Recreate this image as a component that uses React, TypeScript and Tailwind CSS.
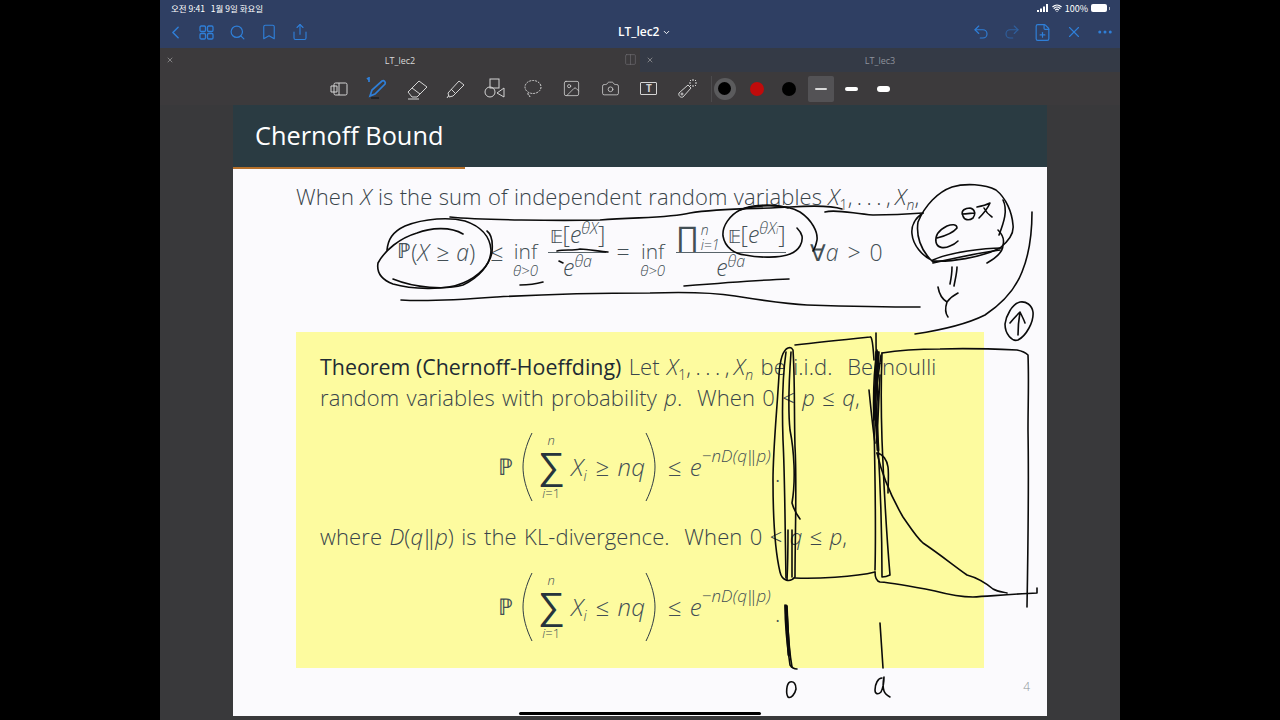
import { ReactNode } from "react";
import { Bookmark, Camera, ChevronDown, ChevronLeft, Columns2, Ellipsis, FilePlus, Image, Redo2, Search, Share, Undo2, Wifi, X } from "lucide-react";

const sans = "font-['Open_Sans','Noto_Sans',sans-serif]";
const dejavu = "font-['DejaVu_Sans',sans-serif]";

const ink = [
  // circle around P(X >= a)
  "M463 234C450 226 430 228 417 233C400 238 385 250 378 263C376 275 385 281 393 284C410 289 445 291 463 283C478 277 490 265 492 252C493 242 491 234 487 231",
  "M387 250C388 240 392 232 405 226C425 218 450 217 465 221C480 226 490 236 491 250C491 265 478 278 463 285C445 290 415 288 393 279",
  // top line
  "M450 217C480 220 560 221 600 220C640 217 670 218 690 213C720 208 760 209 790 207C805 206 830 205 842 209",
  "M825 212C835 209 850 213 873 215C890 215 910 214 923 213",
  // bottom line
  "M401 300C430 302 470 299 497 297C550 294 600 293 650 293C680 292 710 292 735 296C760 300 785 304 807 305C840 306 890 307 920 307",
  // small marks under the fraction
  "M520 285C528 285 536 284 543 282",
  "M557 251C565 249 572 251 580 249C590 249 600 252 608 252",
  "M559 261L563 263",
  "M684 286C720 283 760 280 789 279",
  // ellipse on E[e]
  "M788 208C772 203 750 205 740 210C730 215 722 226 723 236C725 248 735 254 745 255C760 258 780 258 790 254C800 250 803 242 802 236C801 232 799 230 797 228",
  "M740 210C755 205 785 203 800 212C812 220 818 232 817 240C816 245 815 248 813 251",
  // ring on the big e
  "M923 213C915 218 911 226 912 234C913 245 922 256 933 261C950 262 980 258 1000 248C1010 240 1014 232 1013 225C1012 212 1006 198 996 190C985 184 965 183 952 187C938 192 925 205 918 222C916 235 920 250 933 262",
  "M933 260C950 252 985 248 1002 248",
  "M933 263C955 258 985 252 1000 250",
  "M987 263C996 258 1003 252 1003 245C1005 238 1000 232 998 230",
  "M1003 200C1008 210 1004 222 999 235",
  // e theta lambda
  "M937 238C945 236 953 233 957 228C957 224 952 224 947 226C939 230 935 236 936 242C937 248 944 249 950 246C953 245 956 243 958 241",
  "M963 216C960 210 966 208 970 208C975 209 976 214 973 218C969 221 964 220 963 216ZM962 214C967 214 972 213 975 213",
  "M977 207C982 206 986 205 990 203C987 210 983 214 979 218M984 208C986 212 989 215 992 217",
  // under the ring
  "M952 267C952 273 951 279 950 284M957 267C957 273 955 280 954 286",
  "M938 287C939 293 942 299 947 302C950 298 954 295 958 293M947 302C945 308 945 313 948 317",
  // right arc
  "M1032 212C1032 235 1029 255 1022 272C1015 290 1000 305 985 315C965 325 935 331 915 334",
  // circled arrow
  "M1020 302C1012 304 1006 316 1005 324C1005 334 1012 342 1018 340C1026 336 1034 322 1033 312C1032 305 1026 301 1020 302",
  "M1018 335C1018 326 1019 318 1020 312M1010 323C1013 319 1017 315 1020 312C1022 316 1024 320 1025 323",
  // left band
  "M795 345C820 342 850 339 870 337C872 336 873 345 874 360",
  "M876 333C876 345 876 360 877 375",
  "M788 348C783 350 780 360 779 375C777 410 773 450 773 480C773 520 776 555 780 572C782 581 790 583 795 577C795 540 797 480 795 447C794 410 795 380 793 350C792 348 790 347 788 348",
  "M786 352C782 380 782 410 783 440C785 480 785 530 786 578",
  "M791 352C789 380 788 410 790 430C794 450 796 480 792 503C794 510 797 515 800 519",
  "M787 580C788 560 788 545 788 530M792 577L792 530",
  "M795 578C815 579 855 577 875 572",
  // right band
  "M877 350C874 370 873 400 874 425C875 470 876 530 875 570",
  "M869 390C871 410 873 430 875 443",
  "M879 352C877 380 876 410 878 445C880 480 882 540 882 577C886 577 888 576 890 575C887 540 884 490 882 440C881 410 881 380 882 353",
  "M876 352L878 400M878 352L874 420M881 355L875 400M880 375L877 440",
  // falling curve
  "M877 453C883 454 887 460 888 467C889 475 888 485 888 493",
  "M877 453C882 475 892 498 903 517C912 530 917 538 923 543C938 553 953 565 967 575C978 578 987 584 993 589C998 592 1003 592 1007 593",
  // axis
  "M875 572C875 578 876 581 880 582C895 583 915 587 935 591C950 595 965 597 973 597C990 596 1015 594 1037 593C1037 591 1037 590 1037 588",
  // big box
  "M882 353C900 350 920 349 940 349C965 348 995 349 1017 350C1022 351 1025 352 1028 355C1029 380 1028 405 1028 430C1029 490 1028 550 1027 607",
  // lower ticks
  "M785 605C785 625 787 645 790 665C792 668 794 669 797 669",
  "M787 606C788 625 788 645 792 667",
  "M880 623C881 640 882 655 883 668",
  // zero and a
  "M790 682C786 684 786 694 788 697C791 699 795 694 796 689C796 684 794 681 790 682",
  "M882 678C878 678 875 684 875 690C875 694 878 695 881 692C883 688 884 682 884 677C883 682 883 688 884 691C885 694 888 696 890 697",
];

const thick = [
  "M877 352L875 400L878 450",
  "M786 606C787 625 788 640 789 655",
];

const I = ({ children }: { children: ReactNode }) => <span className="italic">{children}</span>;

const Sub = ({ children }: { children: ReactNode }) => (
  <span className="relative top-[5px] text-[14px] leading-none">{children}</span>
);

const Sup = ({ children }: { children: ReactNode }) => (
  <span className="relative -top-[9px] text-[16px] leading-none italic">{children}</span>
);

// X1, ..., Xn run, set tighter than the words around it
const XRun = () => (
  <span className="[word-spacing:0px]">
    <I>X</I><Sub>1</Sub><span className="tracking-[4.5px]">,...,</span><I>X</I><Sub><I>n</I></Sub>
  </span>
);

const Inf = () => (
  <span className="flex flex-col items-center mt-[14px] w-[26px]">
    <span className="text-[21px] leading-[22px]">inf</span>
    <span className="text-[15px] leading-[16px] italic">{"θ>0"}</span>
  </span>
);

const Frac = ({ top, bottom, width }: { top: ReactNode; bottom: ReactNode; width: string }) => (
  <span className={"flex flex-col items-center " + width}>
    <span className="h-[30px] leading-[30px] whitespace-nowrap text-[23px] border-b border-[#59646a] w-full flex justify-center items-end">{top}</span>
    <span className="h-[28px] leading-[28px] whitespace-nowrap text-[23px]">{bottom}</span>
  </span>
);

const Paren = ({ flip }: { flip?: boolean }) => (
  <svg width="11" height="70" viewBox="0 0 11 70" className={flip ? "-scale-x-100" : ""}>
    <path d="M10 1C4 13 1 25 1 35C1 45 4 57 10 69" fill="none" stroke="#2f3c44" strokeWidth="1" />
  </svg>
);

const SumFormula = ({ rel }: { rel: string }) => (
  <div className="flex justify-center items-center h-[72px] text-[#434f55] text-[24px] font-light leading-none [word-spacing:0px]">
    <span className={dejavu + " text-[23px] mr-[9px]"}>ℙ</span>
    <Paren />
    <span className="flex flex-col items-center w-[34px] ml-[1px]">
      <span className="text-[13px] italic leading-[14px]">n</span>
      <span className={"text-[38px] leading-[38px] text-[#26343c] " + dejavu}>∑</span>
      <span className="text-[13px] leading-[16px]"><I>i</I>=1</span>
    </span>
    <span className="ml-[3px]"><I>X</I><Sub><I>i</I></Sub></span>
    <span className="ml-[9px]">{rel}</span>
    <span className="ml-[8px]"><I>nq</I></span>
    <Paren flip />
    <span className="ml-[12px]">≤</span>
    <span className="ml-[8px] flex items-start whitespace-nowrap">
      <I>e</I>
      <span className="text-[17px] leading-[18px] -mt-[8px] italic">−nD(q‖p)</span>
    </span>
    <span className="w-[11px] pl-[4px] relative top-[6px]">.</span>
  </div>
);

const ToolBtn = ({ children }: { children: ReactNode }) => (
  <span className="w-[38.7px] h-[24px] flex items-center justify-center shrink-0">{children}</span>
);

const NavBtn = ({ children }: { children: ReactNode }) => (
  <span className="w-[31px] flex items-center justify-center shrink-0">{children}</span>
);

const Swatch = ({ className }: { className: string }) => (
  <span className="w-[32px] flex items-center justify-center shrink-0"><span className={className} /></span>
);

export default function App() {
  return (
    <div className={"relative w-[1280px] h-[720px] overflow-hidden bg-black flex justify-center " + sans}>
      <div className="w-[960px] h-full flex flex-col bg-[#39393b]">
        {/* status + nav */}
        <div className="h-[48px] bg-[#2f3f63] text-white shrink-0 flex flex-col">
          <div className="h-[16px] flex items-center justify-between pl-[11px] pr-[10px] text-[8.5px] font-['Noto_Sans_CJK_KR','Noto_Sans',sans-serif] leading-none">
            <span className="whitespace-pre">{"오전 9:41   1월 9일 화요일"}</span>
            <span className="flex items-center gap-[2px] text-[9px]">
              <svg width="13" height="8" viewBox="0 0 13 8" fill="white">
                <rect x="0" y="6" width="2" height="2" />
                <rect x="3" y="4.5" width="2" height="3.5" />
                <rect x="6" y="2.5" width="2" height="5.5" />
                <rect x="9" y="0" width="2" height="8" />
              </svg>
              <Wifi size={10} strokeWidth={3} />
              <span className="ml-[1px]">100%</span>
              <span className="w-[16px] h-[8px] bg-white rounded-[2px] ml-[1px]" />
              <span className="w-[1px] h-[3px] bg-white/60" />
            </span>
          </div>
          <div className="flex-1 flex items-center justify-between text-[#2f7fd8] relative">
            <span className="flex items-center">
              <NavBtn><ChevronLeft size={21} strokeWidth={1.7} /></NavBtn>
              <NavBtn>
                <svg width="17" height="17" viewBox="0 0 17 17" fill="none" stroke="currentColor" strokeWidth="1.3">
                  <rect x="2" y="2" width="5.5" height="5.5" rx="1.2" />
                  <rect x="9.5" y="2" width="5.5" height="5.5" rx="1.2" />
                  <rect x="2" y="9.5" width="5.5" height="5.5" rx="1.2" />
                  <rect x="9.5" y="9.5" width="5.5" height="5.5" rx="1.2" />
                </svg>
              </NavBtn>
              <NavBtn><Search size={17} strokeWidth={1.7} /></NavBtn>
              <NavBtn><Bookmark size={18} strokeWidth={1.5} /></NavBtn>
              <NavBtn><Share size={18} strokeWidth={1.5} /></NavBtn>
            </span>
            <span className="absolute left-[458px] top-[7px] text-white text-[12px] font-semibold flex items-center gap-[3px]">
              LT_lec2 <ChevronDown size={9} strokeWidth={2.5} />
            </span>
            <span className="flex items-center">
              <NavBtn><Undo2 size={18} strokeWidth={1.5} /></NavBtn>
              <NavBtn><Redo2 size={18} strokeWidth={1.5} className="opacity-50" /></NavBtn>
              <NavBtn><FilePlus size={19} strokeWidth={1.5} /></NavBtn>
              <NavBtn><X size={18} strokeWidth={1.5} /></NavBtn>
              <NavBtn><Ellipsis size={18} strokeWidth={2} /></NavBtn>
            </span>
          </div>
        </div>

        {/* tabs */}
        <div className="h-[24px] flex shrink-0 text-[9px]">
          <div className="w-[480px] bg-[#3c3a3c] text-[#d8d8d8] relative flex items-center justify-center pt-[1px]">
            <X size={8} className="absolute left-[6px] top-[8px] text-[#a5a5a5]" />
            LT_lec2
            <Columns2 size={13} strokeWidth={1} className="absolute right-[3px] top-[5px] text-[#77767a]" />
          </div>
          <div className="w-[480px] bg-[#343a46] text-[#8d929c] relative flex items-center justify-center pt-[1px]">
            <X size={8} className="absolute left-[6px] top-[8px] text-[#a5a5a5]" />
            LT_lec3
          </div>
        </div>

        {/* toolbar */}
        <div className="h-[33px] bg-[#3c3a3c] shrink-0 flex items-center pl-[160px] text-[#d4d4d4]">
          <ToolBtn>
            <svg width="18" height="16" viewBox="0 0 18 16" fill="none" stroke="currentColor" strokeWidth="1">
              <rect x="4" y="2" width="13" height="12" rx="1.5" />
              <path d="M9 2V14M1 5H7V11H1Z" />
            </svg>
          </ToolBtn>
          <ToolBtn>
            <svg width="24" height="24" viewBox="0 0 24 24" fill="none" stroke="#2f7fd8" strokeWidth="1.7">
              <path d="M4 19L6 13L16 4C18 3 20 5 19 7L9 17Z" />
              <path d="M5 21H13" stroke="#1f2124" />
              <path d="M1 1L3 3M3 -1V5" />
            </svg>
          </ToolBtn>
          <ToolBtn>
            <svg width="24" height="24" viewBox="0 0 24 24" fill="none" stroke="currentColor" strokeWidth="1">
              <path d="M3 15L14 4L22 10L12 20H7Z" />
              <path d="M7 11L15 17M3 22H14" />
            </svg>
          </ToolBtn>
          <ToolBtn>
            <svg width="22" height="22" viewBox="0 0 22 22" fill="none" stroke="currentColor" strokeWidth="1">
              <path d="M4 15L15 3L20 7L9 18L5 19Z" />
              <path d="M7 11L12 16M3 20L5 17" />
            </svg>
          </ToolBtn>
          <ToolBtn>
            <svg width="21" height="21" viewBox="0 0 21 21" fill="none" stroke="currentColor" strokeWidth="1">
              <rect x="6" y="1" width="9" height="9" />
              <circle cx="6" cy="14" r="5" />
              <path d="M20 10V19L13 15Z" />
            </svg>
          </ToolBtn>
          <ToolBtn>
            <svg width="20" height="20" viewBox="0 0 20 20" fill="none" stroke="currentColor" strokeWidth="1">
              <ellipse cx="10" cy="8" rx="8" ry="6.5" strokeDasharray="2 1" />
              <path d="M5 14C4 16 7 16 7 18" />
            </svg>
          </ToolBtn>
          <ToolBtn><Image size={19} strokeWidth={1} /></ToolBtn>
          <ToolBtn><Camera size={19} strokeWidth={1} /></ToolBtn>
          <ToolBtn>
            <span className="w-[17px] h-[13px] border border-current rounded-[1px] text-[10px] font-bold leading-[11px] text-center">T</span>
          </ToolBtn>
          <ToolBtn>
            <svg width="21" height="21" viewBox="0 0 21 21" fill="none" stroke="currentColor" strokeWidth="1">
              <path d="M2 15L11 7L14 10L6 19C4 20 1 18 2 15Z" />
              <circle cx="5" cy="16" r="1" />
              <path d="M16 1V3M16 7V9M12 5H14M18 5H20M13 2L14 3M19 2L18 3M13 8L14 7M19 8L18 7" />
            </svg>
          </ToolBtn>
          <span className="w-[1px] h-[26px] bg-[#4c4b4d] ml-[4px]" />
          <span className="w-[22px] h-[22px] rounded-full bg-[#5b5b5d] flex items-center justify-center ml-[2px]">
            <span className="w-[13px] h-[13px] rounded-full bg-black" />
          </span>
          <span className="w-[5px]" />
          <Swatch className="w-[14px] h-[14px] rounded-full bg-[#c00b0b] block" />
          <Swatch className="w-[14px] h-[14px] rounded-full bg-black block" />
          <span className="w-[26px] h-[26px] rounded-[2px] bg-[#535255] flex items-center justify-center ml-[3px]">
            <span className="w-[12px] h-[2px] bg-[#d9d9d9] rounded-full" />
          </span>
          <span className="w-[2px]" />
          <Swatch className="w-[13px] h-[4px] rounded-full bg-white block" />
          <Swatch className="w-[13px] h-[6px] rounded-full bg-white block" />
        </div>

        {/* page */}
        <div className="flex-1 flex justify-center">
          <div className="w-[814px] h-[611px] bg-[#fbfafd] flex flex-col">
            <div className="h-[62px] bg-[#2a3b42] shrink-0 flex items-center pl-[22px] text-white text-[25.3px]">
              Chernoff Bound
            </div>
            <div className="h-[2px] w-[232px] bg-[#b5702a] shrink-0" />
            <div className="pl-[63px] pt-[12px] text-[22px] leading-[30px] font-light text-[#39444a] whitespace-nowrap tracking-[0.1px] [word-spacing:0.5px]">
              When <I>X</I> is the sum of independent random variables <XRun />,
            </div>
            <div className="mt-[6px] h-[70px] flex justify-center items-center text-[#434f55] font-light text-[23px] whitespace-nowrap">
              <span className={dejavu + " text-[21px]"}>ℙ</span>
              <span>(<I>X</I></span>
              <span className="mx-[7px]">≥</span>
              <span className="mr-[1px]"><I>a</I>)</span>
              <span className="ml-[14px] mr-[9px]">≤</span>
              <Inf />
              <span className="w-[10px]" />
              <Frac width="w-[58px]" top={<span><span className={dejavu + " text-[18px]"}>𝔼</span>[<I>e</I><Sup>θX</Sup>]</span>} bottom={<span><I>e</I><Sup>θa</Sup></span>} />
              <span className="mx-[10px]">=</span>
              <Inf />
              <span className="w-[10px]" />
              <Frac width="w-[110px]" top={
                <>
                  <span className={dejavu + " text-[28px] leading-[30px]"}>∏</span>
                  <span className="flex flex-col items-start w-[26px] ml-[2px] text-[14px] leading-[15px] italic">
                    <span>n</span>
                    <span>i=1</span>
                  </span>
                  <span className="ml-[2px]"><span className={dejavu + " text-[18px]"}>𝔼</span>[<I>e</I><Sup>θX<span className="text-[10px]">i</span></Sup>]</span>
                </>
              } bottom={<span><I>e</I><Sup>θa</Sup></span>} />
              <span className="ml-[24px]">∀<I>a</I></span>
              <span className="ml-[9px]">&gt;</span>
              <span className="ml-[9px]">0</span>
            </div>

            <div className="mt-[45px] mx-[63px] h-[336px] bg-[#fdfb9f] pt-[19px] px-[24px] text-[22px] leading-[31px] font-light text-[#39454b] whitespace-nowrap shrink-0 tracking-[0.1px] [word-spacing:1.5px]">
              <div><span className="font-normal text-[21.4px] text-[#1f2b33] [word-spacing:0px] tracking-normal">Theorem (Chernoff-Hoeffding)</span> Let <XRun /> be i.i.d.&nbsp; Bernoulli</div>
              <div>random variables with probability <I>p</I>.&nbsp; When 0 &lt; <I>p</I> ≤ <I>q</I>,</div>
              <div className="-mx-[24px] mt-[18px]"><SumFormula rel="≥" /></div>
              <div className="mt-[18px]">where <I>D</I>(<I>q</I>‖<I>p</I>) is the KL-divergence.&nbsp; When 0 &lt; <I>q</I> ≤ <I>p</I>,</div>
              <div className="-mx-[24px] mt-[19px]"><SumFormula rel="≤" /></div>
            </div>
            <div className="flex justify-end pr-[17px] pt-[11px] text-[12px] leading-[16px] font-light text-[#8a9296]">4</div>
          </div>
        </div>
      </div>

      {/* ink layer and home indicator sit above the page */}
      <svg className="absolute inset-0 pointer-events-none" width="1280" height="720" viewBox="0 0 1280 720" fill="none" stroke="#0b0b0b" strokeLinecap="round" strokeLinejoin="round">
        {ink.map((d, i) => (
          <path key={i} d={d} strokeWidth="1.6" />
        ))}
        {thick.map((d, i) => (
          <path key={i} d={d} strokeWidth="3" />
        ))}
      </svg>
      <div className="absolute left-[519px] top-[712px] w-[242px] h-[3px] bg-black rounded-full" />
    </div>
  );
}
